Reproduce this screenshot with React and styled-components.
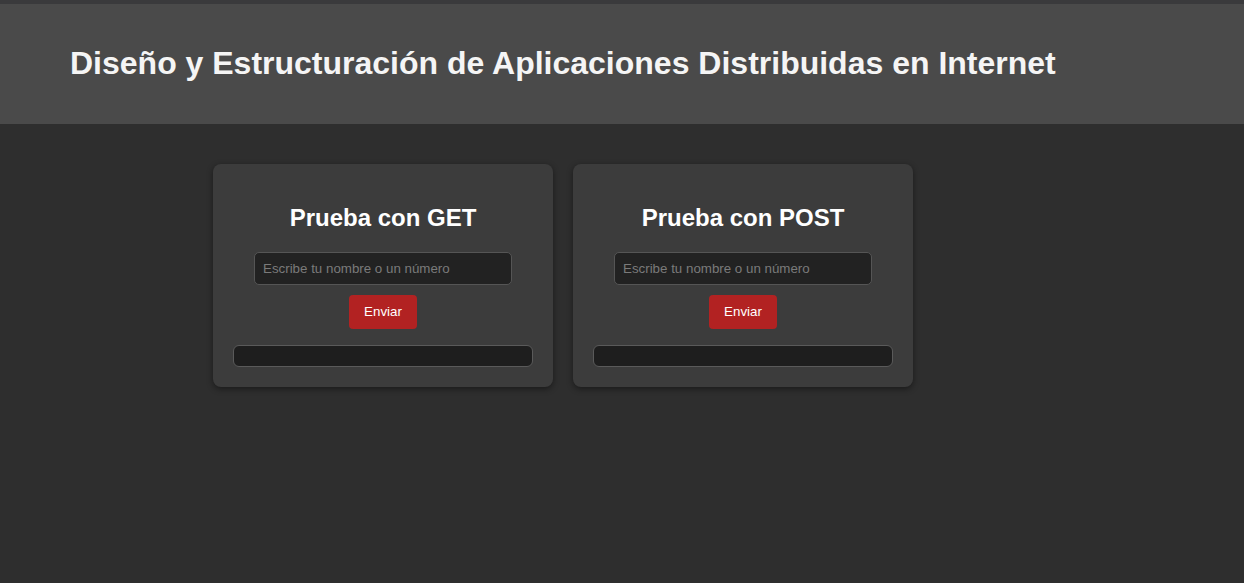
import React from "react";
import styled, { createGlobalStyle } from "styled-components";

const Global = createGlobalStyle`
  html, body { margin: 0; padding: 0; }
  body {
    background: #2e2e2e;
    font-family: "Liberation Sans", Arial, sans-serif;
    color: #fff;
    min-height: 583px;
  }
`;

const TopStrip = styled.div`
  height: 4px;
  background: #3a3a3c;
`;

const Header = styled.header`
  background: #4a4a4a;
  padding: 20px 70px;
`;

const Title = styled.h1`
  margin: 21.44px 0;
  font-size: 32px;
  line-height: 37px;
  font-weight: bold;
  color: #f5f5f5;
`;

const Cards = styled.main`
  display: flex;
  gap: 20px;
  padding: 40px 0 0 213px;
  align-items: flex-start;
`;

const Card = styled.section`
  width: 340px;
  box-sizing: border-box;
  background: #3c3c3c;
  border-radius: 8px;
  padding: 20px;
  box-shadow: 0 2px 6px rgba(0, 0, 0, 0.45);
  display: flex;
  flex-direction: column;
  align-items: center;
`;

const CardTitle = styled.h2`
  margin: 19.92px 0 20.92px;
  font-size: 24px;
  line-height: 27.6px;
  font-weight: bold;
  color: #fff;
  text-align: center;
`;

const Input = styled.input`
  width: 80%;
  box-sizing: content-box;
  padding: 8px;
  border: 1px solid #555;
  border-radius: 5px;
  background: #222;
  color: #ddd;
  font-family: "Liberation Sans", Arial, sans-serif;
  font-size: 13.33px;
  line-height: 15px;
  height: 15px;
  outline: none;
  &::placeholder { color: #7a7a7a; }
`;

const Button = styled.button`
  margin-top: 10px;
  padding: 9px 15px;
  border: none;
  border-radius: 4px;
  background: #b22222;
  color: #fff;
  font-family: "Liberation Sans", Arial, sans-serif;
  font-size: 13.33px;
  line-height: 16px;
  cursor: pointer;
`;

const Output = styled.div`
  align-self: stretch;
  margin-top: 16px;
  height: 20px;
  background: #1e1e1e;
  border: 1px solid #5a5a5a;
  border-radius: 6px;
`;

function TestCard({ method }) {
  return (
    <Card>
      <CardTitle>Prueba con {method}</CardTitle>
      <Input placeholder="Escribe tu nombre o un número" />
      <Button>Enviar</Button>
      <Output />
    </Card>
  );
}

export default function App() {
  return (
    <>
      <Global />
      <TopStrip />
      <Header>
        <Title>Diseño y Estructuración de Aplicaciones Distribuidas en Internet</Title>
      </Header>
      <Cards>
        <TestCard method="GET" />
        <TestCard method="POST" />
      </Cards>
    </>
  );
}
